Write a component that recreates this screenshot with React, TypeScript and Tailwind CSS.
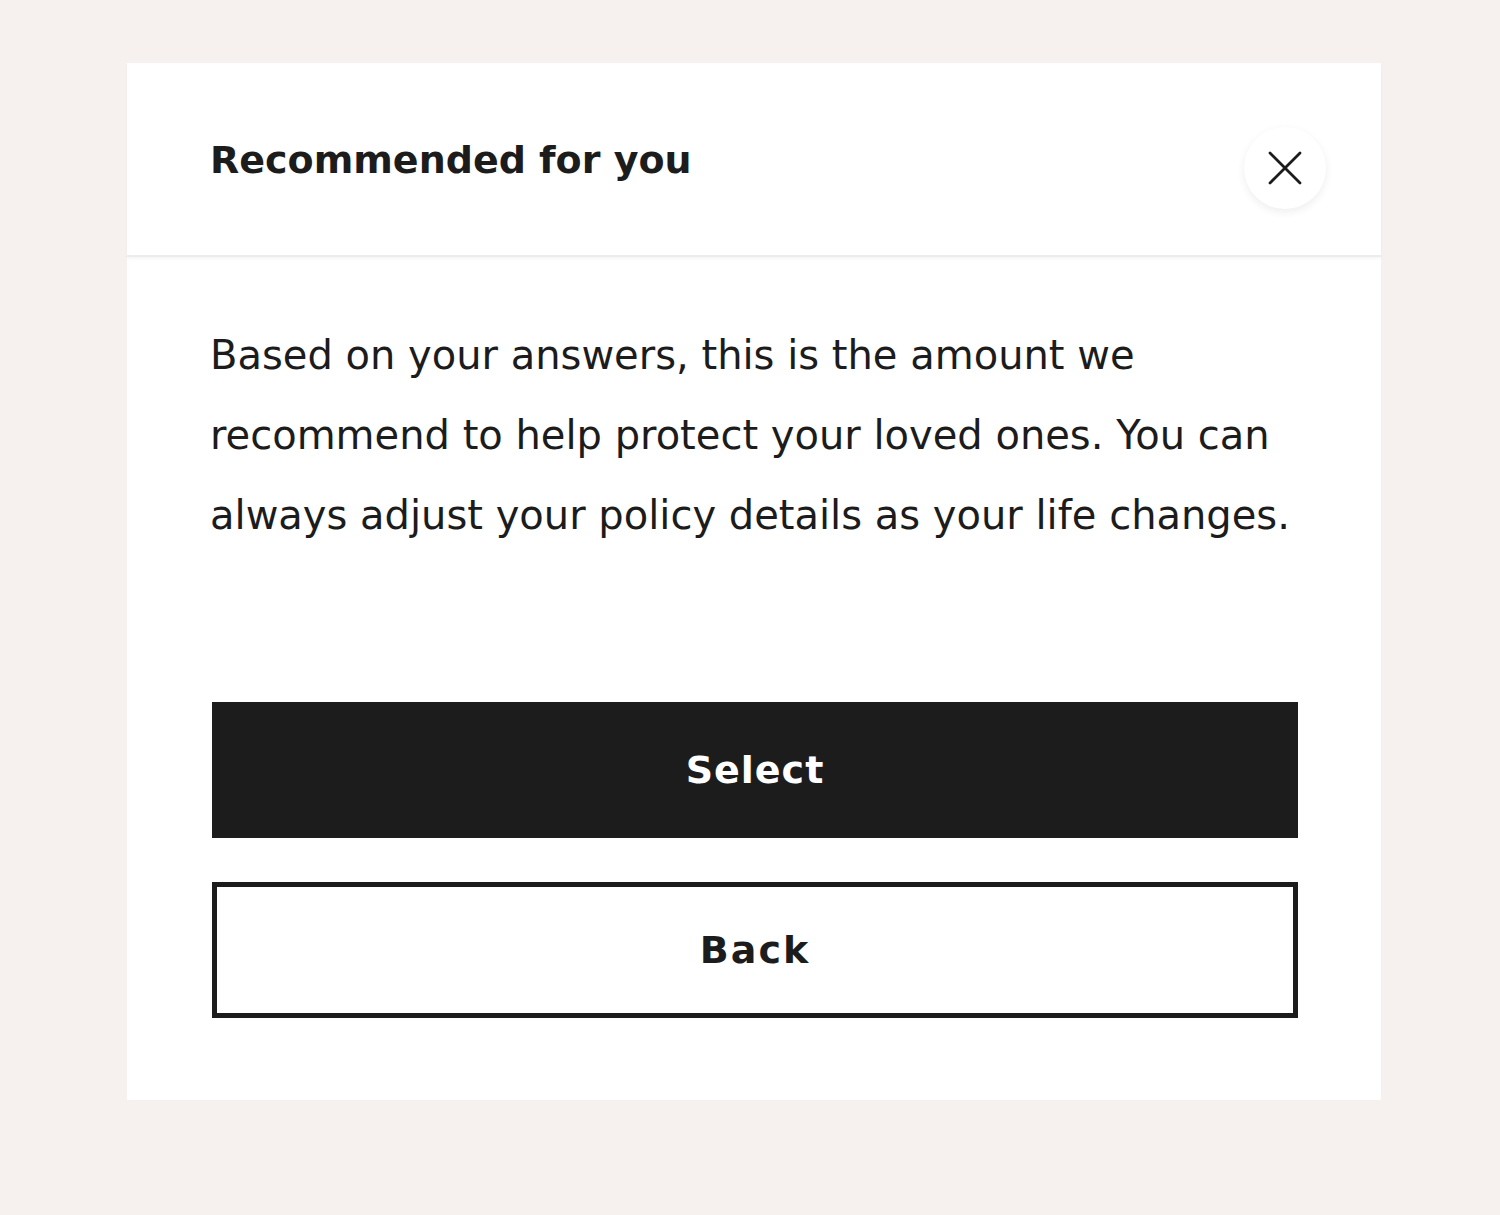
import { X } from "lucide-react";

export default function App() {
	return (
		<div className="min-h-[1215px] bg-[#f6f1ee] pl-[127px] pr-[119px] pt-[63px] font-['DejaVu_Sans',sans-serif] text-[#1c1c1c]">
			<div className="bg-white">
				<div className="flex items-start justify-between h-[194px] pl-[83px] pr-[55px] pt-[72px] border-b-2 border-[#ececec] shadow-[0_2px_3px_rgba(0,0,0,0.04)]">
					<h2 className="text-[38px] font-semibold leading-[50px]">
						Recommended for you
					</h2>
					<button
						type="button"
						aria-label="Close"
						className="mt-[-8px] w-[82px] h-[82px] rounded-full bg-white shadow-[0_3px_8px_rgba(0,0,0,0.07)] flex items-center justify-center"
					>
						<X className="w-[60px] h-[60px]" strokeWidth={1.1} />
					</button>
				</div>
				<div className="px-[83px] pt-[58px] pb-[82px]">
					<p className="text-[40px] leading-[80px]">
						Based on your answers, this is the amount we
						<br />
						recommend to help protect your loved ones. You can
						<br />
						always adjust your policy details as your life changes.
					</p>
					<div className="mt-[147px] flex flex-col gap-[44px] pl-[2px]">
						<button
							type="button"
							className="h-[136px] bg-[#1c1c1c] text-white text-[38px] font-bold tracking-[1px]"
						>
							Select
						</button>
						<button
							type="button"
							className="h-[136px] border-[5px] border-[#1c1c1c] bg-white text-[38px] font-bold tracking-[2px]"
						>
							Back
						</button>
					</div>
				</div>
			</div>
		</div>
	);
}
